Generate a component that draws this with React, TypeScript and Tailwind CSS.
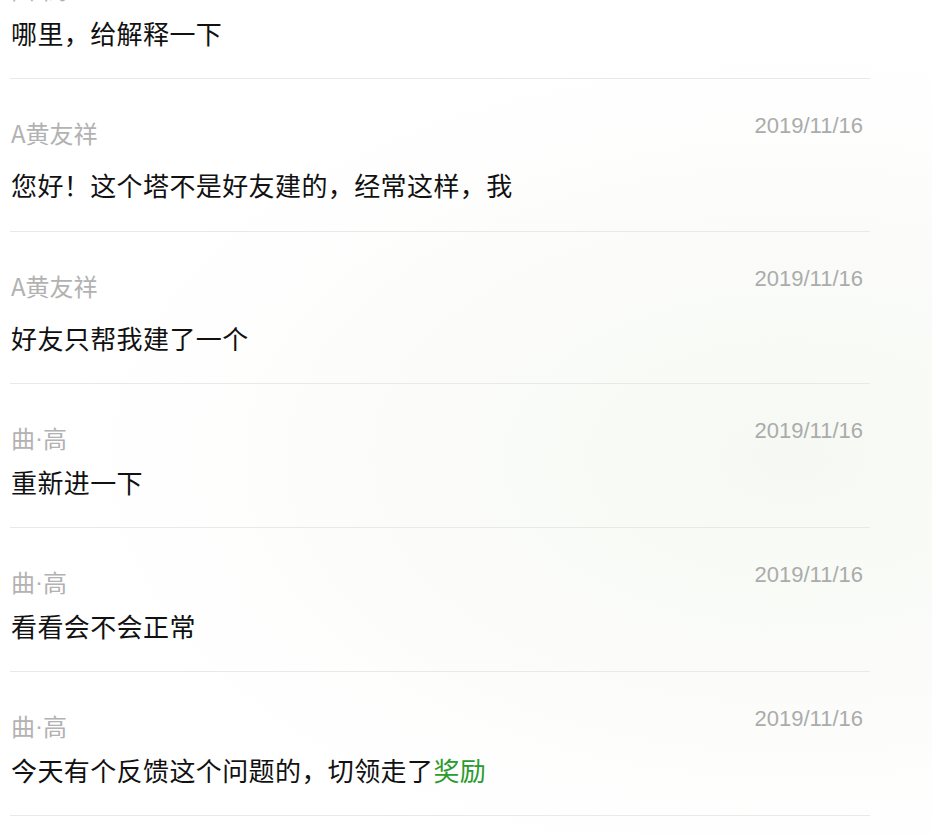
import React from 'react';

interface Reply {
  name: React.ReactNode;
  date: string;
  text: React.ReactNode;
  tall?: boolean;
}

// the dot in 曲·高 is the narrow latin one, not the full-width CJK glyph
const Qu = () => (
  <>
    曲<span style={{ fontFamily: '"Liberation Sans", Arial, sans-serif' }}>·</span>高
  </>
);

const replies: Reply[] = [
  { name: <Qu />, date: '2019/11/16', text: '哪里，给解释一下' },
  { name: 'A黄友祥', date: '2019/11/16', text: '您好！这个塔不是好友建的，经常这样，我', tall: true },
  { name: 'A黄友祥', date: '2019/11/16', text: '好友只帮我建了一个', tall: true },
  { name: <Qu />, date: '2019/11/16', text: '重新进一下' },
  { name: <Qu />, date: '2019/11/16', text: '看看会不会正常' },
  {
    name: <Qu />,
    date: '2019/11/16',
    text: (
      <>
        今天有个反馈这个问题的，切领走了<span className="text-[#2b9a2f]">奖励</span>
      </>
    ),
  },
];

const App: React.FC = () => {
  return (
    <div
      className="w-[932px] h-[836px] overflow-hidden bg-[radial-gradient(ellipse_at_85%_55%,#f6f9f3_0%,#fbfcfa_35%,#ffffff_65%)]"
      style={{ fontFamily: '"Noto Sans CJK SC", "Noto Sans", sans-serif' }}
    >
      <div className="ml-[10px] w-[860px]">
        {replies.map((r, i) => (
          <div
            key={i}
            className={`pl-[1px] pr-[7px] pt-[36px] border-b border-[#e9e9e9] ${i === 0 ? '-mt-[65px]' : ''} ${i === 1 ? 'pb-[33px]' : 'pb-[32px]'}`}
          >
            <div className="flex justify-between items-start h-[30px]">
              <span className="mt-[6px] h-[24px] flex items-center text-[24px] leading-[24px] text-[#b2b2b2]">
                {r.name}
              </span>
              <span
                className="text-[22px] leading-[22px] text-[#ababab]"
                style={{ fontFamily: '"Liberation Sans", Arial, sans-serif' }}
              >
                {r.date}
              </span>
            </div>
            <div
              className={`${r.tall ? 'mt-[27px]' : 'mt-[19px]'} h-[26px] text-[26px] leading-[26px] tracking-[0.4px] text-[#111111]`}
            >
              {r.text}
            </div>
          </div>
        ))}
      </div>
    </div>
  );
};

export default App;
